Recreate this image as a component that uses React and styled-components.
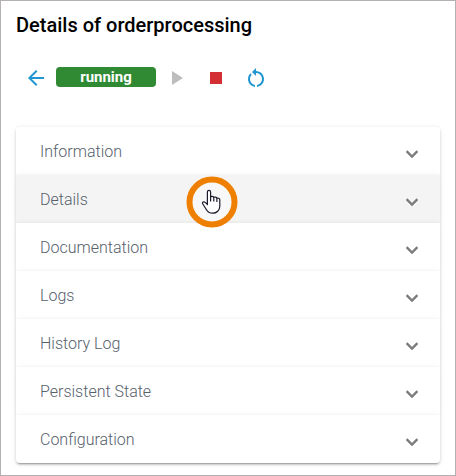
import React, { useState } from "react";
import styled, { createGlobalStyle } from "styled-components";
import {
	MdArrowBack,
	MdPlayArrow,
	MdStop,
	MdRestartAlt,
	MdExpandMore,
} from "react-icons/md";

const GlobalStyle = createGlobalStyle`
	* {
		box-sizing: border-box;
	}
	body {
		margin: 0;
		font-family: Roboto, sans-serif;
		background-color: white;
	}
`;

const Container = styled.main`
	min-height: 100vh;
	padding: 12px 15px;
	border: 1px solid #b5b0b2;
`;

const Title = styled.h1`
	margin: 0;
	font-size: 20px;
	line-height: 24px;
	font-weight: 500;
	color: black;
`;

const Toolbar = styled.div`
	display: flex;
	align-items: center;
	gap: 16px;
	padding: 29px 8px 37px;
`;

const StatusGroup = styled.div`
	display: flex;
	align-items: center;
	gap: 8px;
`;

const IconButton = styled.button`
	display: flex;
	padding: 0;
	border: none;
	background: none;
	font-size: 24px;
	color: ${(props) => props.$color};
	cursor: pointer;
`;

const Status = styled.span`
	width: 100px;
	height: 20px;
	margin-bottom: 2px;
	border-radius: 4px;
	background-color: #2f8a33;
	color: white;
	font-size: 15px;
	line-height: 20px;
	font-weight: 700;
	text-align: center;
`;

const Accordion = styled.div`
	display: flex;
	flex-direction: column;
`;

const Panel = styled.section`
	position: relative;
	background-color: ${(props) => (props.$active ? "#f4f4f4" : "white")};
	box-shadow: 0 3px 1px -2px rgba(0, 0, 0, 0.2),
		0 2px 2px 0 rgba(0, 0, 0, 0.14), 0 1px 5px 0 rgba(0, 0, 0, 0.12);

	&:first-child {
		border-radius: 4px 4px 0 0;
	}
	&:last-child {
		border-radius: 0 0 4px 4px;
	}
`;

const PanelHeader = styled.button`
	display: flex;
	align-items: center;
	justify-content: space-between;
	width: 100%;
	height: 48px;
	padding: 0 16px 0 24px;
	border: none;
	background: none;
	font-family: inherit;
	font-size: 16px;
	font-weight: 300;
	color: #56616c;
	cursor: pointer;
`;

const Chevron = styled(MdExpandMore)`
	margin-top: 6px;
	font-size: 24px;
	color: #7c7c7c;

	path {
		stroke: none;
	}
	path:last-child {
		stroke: currentColor;
		stroke-width: 0.5;
	}
`;

const PanelBody = styled.div`
	padding: 0 24px 16px;
	font-size: 14px;
`;

/* lies over the highlighted row and the edges of its neighbours */
const Pointer = styled.svg`
	position: absolute;
	z-index: 1;
	top: 1px;
	left: 40%;
	pointer-events: none;
`;

const sections = [
	"Information",
	"Details",
	"Documentation",
	"Logs",
	"History Log",
	"Persistent State",
	"Configuration",
];

const HandPointer = () => (
	<Pointer width="52" height="52" viewBox="0 0 52 52" aria-hidden="true">
		<circle cx="26" cy="26" r="22.5" fill="#f8f8f8" stroke="#ee7f00" strokeWidth="6" />
		<path
			d="M21.4 28.5V16a1.6 1.6 0 0 1 3.2 0v5c.6-.9 2.9-.8 3.2.4.8-.7 2.8-.4 3.1.8 1-.5 2.9 0 2.9 1.6v6.4c0 4-3.2 7-7 7-3.6 0-5.4-1.5-6.8-4.2l-3.3-5.2c-.9-1.5 1.2-2.8 2.5-1.4z"
			fill="white"
			stroke="#1c1a2b"
			strokeWidth="1.2"
			strokeLinejoin="round"
		/>
		<path d="M24.6 20.5v5M27.8 21v4.5M30.9 22v4" stroke="#1c1a2b" strokeWidth="1.2" />
	</Pointer>
);

const App = () => {
	const [open, setOpen] = useState(null);

	const handleToggle = (name) => {
		setOpen(open === name ? null : name);
	};

	return (
		<Container>
			<GlobalStyle />
			<Title>Details of orderprocessing</Title>
			<Toolbar>
				<StatusGroup>
					<IconButton $color="#2196d0" aria-label="Back">
						<MdArrowBack />
					</IconButton>
					<Status>running</Status>
					<IconButton $color="#bdbdbd" aria-label="Start" disabled>
						<MdPlayArrow />
					</IconButton>
				</StatusGroup>
				<IconButton $color="#d32f35" aria-label="Stop">
					<MdStop />
				</IconButton>
				<IconButton $color="#2196d0" aria-label="Restart">
					<MdRestartAlt />
				</IconButton>
			</Toolbar>
			<Accordion>
				{sections.map((name) => (
					<Panel key={name} $active={name === "Details"}>
						<PanelHeader
							aria-expanded={open === name}
							onClick={() => handleToggle(name)}
						>
							{name}
							<Chevron />
						</PanelHeader>
						{open === name && <PanelBody />}
						{name === "Details" && <HandPointer />}
					</Panel>
				))}
			</Accordion>
		</Container>
	);
};

export default App;
